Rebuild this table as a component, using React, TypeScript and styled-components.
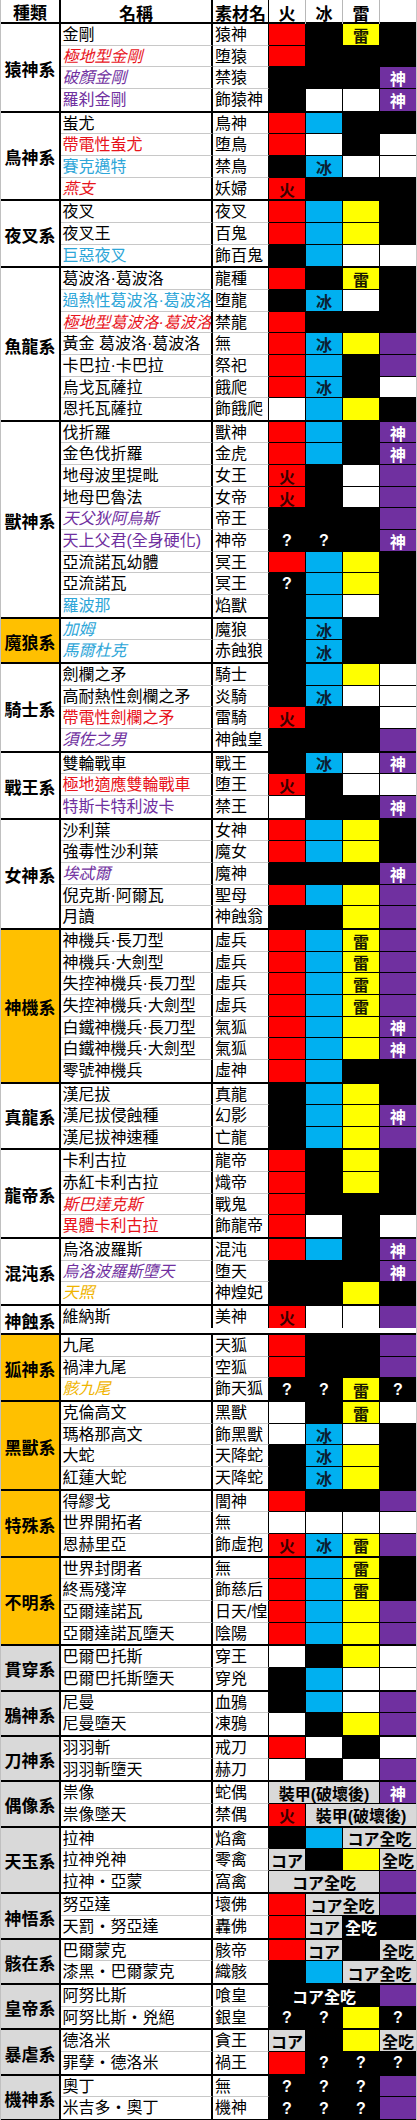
import React from "react";
import styled, { createGlobalStyle } from "styled-components";

const GlobalStyle = createGlobalStyle`
  body { margin: 0; background: #fff; }
  * { box-sizing: border-box; }
`;

const ROW_H = 21.66;

type Bg = "w" | "o" | "g";
type Tone = "r" | "b" | "p" | "g";
type RowData = [string, string, string, string?];
interface GroupData {
  cat: string;
  bg?: Bg;
  rows: RowData[];
}

const CAT_BG: Record<Bg, string> = { w: "#ffffff", o: "#ffc000", g: "#d9d9d9" };
const TONES: Record<Tone, string> = { r: "#e8141c", b: "#2ea6d8", p: "#7030a0", g: "#f0b400" };
const CELL_BG: Record<string, string> = {
  R: "#ff0000",
  B: "#00b0f0",
  Y: "#ffff00",
  P: "#7030a0",
  W: "#ffffff",
  K: "#000000",
  G: "#d9d9d9",
};
const CELL_FG: Record<string, string> = {
  R: "#3a0000",
  B: "#0b1f33",
  Y: "#1a1a00",
  P: "#ffffff",
  W: "#000000",
  K: "#ffffff",
  G: "#000000",
};

const groups: GroupData[] = [
  { cat: "猿神系", rows: [
    ["金剛", "猿神", "R K Y雷 K"],
    ["極地型金剛", "堕猿", "R K K K", "ri"],
    ["破顏金剛", "禁猿", "K K K P神", "pi"],
    ["羅刹金剛", "飾猿神", "K W W P神", "p"],
  ] },
  { cat: "鳥神系", rows: [
    ["蚩尤", "鳥神", "R B K K"],
    ["帶電性蚩尤", "堕鳥", "R W K W", "r"],
    ["賽克邁特", "禁鳥", "K B冰 W W", "b"],
    ["燕支", "妖婦", "R火 K K K", "ri"],
  ] },
  { cat: "夜叉系", rows: [
    ["夜叉", "夜叉", "R B Y K"],
    ["夜叉王", "百鬼", "R B Y K"],
    ["巨惡夜叉", "飾百鬼", "K B W W", "b"],
  ] },
  { cat: "魚龍系", rows: [
    ["葛波洛·葛波洛", "龍種", "R K Y雷 K"],
    ["過熱性葛波洛·葛波洛", "堕龍", "K B冰 W K", "b"],
    ["極地型葛波洛·葛波洛", "禁龍", "R K K K", "ri"],
    ["黃金 葛波洛·葛波洛", "無", "R B冰 Y P"],
    ["卡巴拉·卡巴拉", "祭祀", "R B K P"],
    ["烏戈瓦薩拉", "餓爬", "R B冰 K W"],
    ["恩托瓦薩拉", "飾餓爬", "W B Y K"],
  ] },
  { cat: "獸神系", rows: [
    ["伐折羅", "獸神", "R B K P神"],
    ["金色伐折羅", "金虎", "R B K P神"],
    ["地母波里提毗", "女王", "R火 K W P"],
    ["地母巴魯法", "女帝", "R火 K W P"],
    ["天父狄阿烏斯", "帝王", "K K K P", "pi"],
    ["天上父君(全身硬化)", "神帝", "K? K? K P神", "p"],
    ["亞流諾瓦幼體", "冥王", "R B Y K"],
    ["亞流諾瓦", "冥王", "K? B Y K"],
    ["羅波那", "焰獸", "K B W K", "b"],
  ] },
  { cat: "魔狼系", bg: "o", rows: [
    ["加姆", "魔狼", "K B冰 K K", "bi"],
    ["馬爾杜克", "赤蝕狼", "K B冰 K K", "bi"],
  ] },
  { cat: "騎士系", rows: [
    ["劍欄之矛", "騎士", "K B Y W"],
    ["高耐熱性劍欄之矛", "炎騎", "K B冰 W W"],
    ["帶電性劍欄之矛", "雷騎", "R火 K K W", "r"],
    ["須佐之男", "神蝕皇", "K K K P", "pi"],
  ] },
  { cat: "戰王系", rows: [
    ["雙輪戰車", "戰王", "K B冰 W P神"],
    ["極地適應雙輪戰車", "堕王", "R火 K W W", "r"],
    ["特斯卡特利波卡", "禁王", "W K K P神", "p"],
  ] },
  { cat: "女神系", rows: [
    ["沙利葉", "女神", "R B Y K"],
    ["強毒性沙利葉", "魔女", "R B Y K"],
    ["埃忒爾", "魔神", "K K K P神", "pi"],
    ["倪克斯·阿爾瓦", "聖母", "R B Y P"],
    ["月讀", "神蝕翁", "K K Y P"],
  ] },
  { cat: "神機系", bg: "o", rows: [
    ["神機兵·長刀型", "虛兵", "R B Y雷 P"],
    ["神機兵·大劍型", "虛兵", "R B Y雷 P"],
    ["失控神機兵·長刀型", "虛兵", "R B Y雷 P"],
    ["失控神機兵·大劍型", "虛兵", "R B Y雷 P"],
    ["白鐵神機兵·長刀型", "氣狐", "R B Y P神"],
    ["白鐵神機兵·大劍型", "氣狐", "R B Y P神"],
    ["零號神機兵", "虛神", "R B K K"],
  ] },
  { cat: "真龍系", rows: [
    ["漢尼拔", "真龍", "K B Y K"],
    ["漢尼拔侵蝕種", "幻影", "K B Y P神"],
    ["漢尼拔神速種", "亡龍", "K B Y P"],
  ] },
  { cat: "龍帝系", rows: [
    ["卡利古拉", "龍帝", "R K Y K"],
    ["赤紅卡利古拉", "熾帝", "R K Y K"],
    ["斯巴達克斯", "戰鬼", "R K K K", "ri"],
    ["異體卡利古拉", "飾龍帝", "R W K W", "r"],
  ] },
  { cat: "混沌系", rows: [
    ["烏洛波羅斯", "混沌", "R B K P神"],
    ["烏洛波羅斯墮天", "堕天", "K K K P神", "pi"],
    ["天照", "神煌妃", "K K Y K", "gi"],
  ] },
  { cat: "神蝕系", rows: [["維納斯", "美神", "R火 W W P"]] },
  { cat: "狐神系", bg: "o", rows: [
    ["九尾", "天狐", "R K K P"],
    ["禍津九尾", "空狐", "R K K P"],
    ["骸九尾", "飾天狐", "K? K? Y雷 K?", "gi"],
  ] },
  { cat: "黑獸系", bg: "o", rows: [
    ["克倫高文", "黑獸", "W K Y雷 W"],
    ["瑪格那高文", "飾黑獸", "W B冰 W K"],
    ["大蛇", "天降蛇", "K B冰 Y K"],
    ["紅蓮大蛇", "天降蛇", "K B冰 Y K"],
  ] },
  { cat: "特殊系", bg: "o", rows: [
    ["得繆戈", "闇神", "R K K P"],
    ["世界開拓者", "無", "W W W W"],
    ["恩赫里亞", "飾虛抱", "R火 B冰 Y雷 P"],
  ] },
  { cat: "不明系", bg: "o", rows: [
    ["世界封閉者", "無", "R B Y雷 K"],
    ["終焉殘滓", "飾慈后", "R B Y雷 K"],
    ["亞爾達諾瓦", "日天/惶", "R B Y P"],
    ["亞爾達諾瓦墮天", "陰陽", "R B Y P"],
  ] },
  { cat: "貫穿系", bg: "g", rows: [
    ["巴爾巴托斯", "穿王", "W K Y W"],
    ["巴爾巴托斯墮天", "穿兇", "K B W W"],
  ] },
  { cat: "鴉神系", bg: "g", rows: [
    ["尼曼", "血鴉", "K B W P"],
    ["尼曼墮天", "凍鴉", "W K Y P"],
  ] },
  { cat: "刀神系", bg: "g", rows: [
    ["羽羽斬", "戒刀", "R W K W"],
    ["羽羽斬墮天", "赫刀", "W K W P"],
  ] },
  { cat: "偶像系", bg: "g", rows: [
    ["祟像", "蛇偶", "G3裝甲(破壞後) P神"],
    ["祟像墜天", "禁偶", "R火 G3裝甲(破壞後)"],
  ] },
  { cat: "天玉系", bg: "g", rows: [
    ["拉神", "焰禽", "K B G2コア全吃"],
    ["拉神兇神", "零禽", "Gコア K Y G全吃"],
    ["拉神・亞蒙", "窩禽", "G3コア全吃 P"],
  ] },
  { cat: "神悟系", bg: "g", rows: [
    ["努亞達", "壞佛", "R G2コア全吃 P"],
    ["天罰・努亞達", "轟佛", "R Gコア K全吃 K"],
  ] },
  { cat: "骸在系", bg: "g", rows: [
    ["巴爾蒙克", "骸帝", "R Gコア K G全吃"],
    ["漆黑・巴爾蒙克", "織骸", "K B G2コア全吃"],
  ] },
  { cat: "皇帝系", bg: "g", rows: [
    ["阿努比斯", "喰皇", "K3コア全吃 P"],
    ["阿努比斯・兇絕", "銀皇", "K? K? Y K?"],
  ] },
  { cat: "暴虐系", bg: "g", rows: [
    ["德洛米", "貪王", "Gコア K Y G全吃"],
    ["罪孽・德洛米", "禍王", "R K? K? K?"],
  ] },
  { cat: "機神系", bg: "g", rows: [
    ["奧丁", "無", "K? K? K? P"],
    ["米吉多・奧丁", "機神", "K? K? K? P"],
  ] },
];

const Sheet = styled.div`
  width: 417px;
  border-left: 1px solid #c0c0c0;
  border-right: 1px solid #c8c8c8;
  font-family: "Noto Sans CJK TC", "Noto Sans CJK JP", sans-serif;
  color: #000;
`;

const HeaderRow = styled.div`
  display: flex;
  height: 24px;
  border-bottom: 2px solid #000;
`;

const HeadCat = styled.div`
  width: 60px;
  flex: none;
  border-right: 2px solid #000;
  display: flex;
  align-items: center;
  justify-content: center;
  font-size: 17px;
  font-weight: 700;
`;

const HeadGrid = styled.div`
  flex: 1;
  display: grid;
  grid-template-columns: 152px 56px 37px 37px 37px 36px;
`;

const HeadCell = styled.div<{ $edge: "thick" | "thin" | "grid" | "none" }>`
  display: flex;
  align-items: center;
  justify-content: center;
  font-size: 17px;
  font-weight: 700;
  white-space: nowrap;
  border-right: ${({ $edge }) =>
    $edge === "thick"
      ? "2px solid #000"
      : $edge === "thin"
      ? "1px solid #000"
      : $edge === "grid"
      ? "1px solid #b8b8b8"
      : "0"};
`;

const Group = styled.div`
  display: flex;
  border-bottom: 2px solid #000;
`;

const CatCell = styled.div<{ $bg: Bg }>`
  width: 60px;
  flex: none;
  border-right: 2px solid #000;
  background: ${({ $bg }) => CAT_BG[$bg]};
  display: flex;
  align-items: center;
  justify-content: center;
  font-size: 17px;
  font-weight: 700;
  white-space: nowrap;
  padding-top: 2px;
`;

const Rows = styled.div`
  flex: 1;
  display: flex;
  flex-direction: column;
`;

const Row = styled.div`
  display: grid;
  grid-template-columns: 152px 56px 37px 37px 37px 36px;
  height: ${ROW_H}px;

  &:last-child > div {
    border-bottom-width: 0;
  }
`;

const NameCell = styled.div<{ $tone?: Tone; $italic?: boolean }>`
  border-right: 2px solid #000;
  border-bottom: 1px solid #c8c8c8;
  padding: 1px 0 0 1.5px;
  font-family: "Liberation Sans", "Noto Sans CJK TC", "Noto Sans CJK JP", sans-serif;
  font-size: 16px;
  line-height: ${ROW_H - 1}px;
  white-space: nowrap;
  overflow: hidden;
  color: ${({ $tone }) => ($tone ? TONES[$tone] : "#000")};
  font-style: ${({ $italic }) => ($italic ? "italic" : "normal")};
`;

const MatCell = styled.div`
  border-right: 1px solid #000;
  border-bottom: 1px solid #c8c8c8;
  padding: 1px 0 0 2px;
  font-family: "Liberation Sans", "Noto Sans CJK TC", "Noto Sans CJK JP", sans-serif;
  font-size: 16px;
  line-height: ${ROW_H - 1}px;
  white-space: nowrap;
  overflow: hidden;
`;

const ElemCell = styled.div<{ $c: string; $span: number }>`
  grid-column: span ${({ $span }) => $span};
  background: ${({ $c }) => CELL_BG[$c]};
  color: ${({ $c }) => CELL_FG[$c]};
  border-right: 1px solid #000;
  border-bottom: 1px solid #000;
  display: flex;
  align-items: center;
  justify-content: center;
  font-family: "Liberation Sans", "Noto Sans CJK TC", "Noto Sans CJK JP", sans-serif;
  font-size: 16px;
  font-weight: 700;
  white-space: nowrap;
  overflow: hidden;
  padding-top: 1px;

  &:last-child {
    border-right: 0;
  }
`;

function parseCells(spec: string) {
  return spec.split(" ").map((t) => {
    const c = t[0];
    if (/\d/.test(t[1] ?? "")) return { c, span: Number(t[1]), text: t.slice(2) };
    return { c, span: 1, text: t.slice(1) };
  });
}

function toneOf(style?: string): { tone?: Tone; italic: boolean } {
  if (!style) return { italic: false };
  return { tone: style[0] as Tone, italic: style.includes("i") };
}

export default function App() {
  return (
    <>
      <GlobalStyle />
      <Sheet>
        <HeaderRow>
          <HeadCat>種類</HeadCat>
          <HeadGrid>
            <HeadCell $edge="thick">名稱</HeadCell>
            <HeadCell $edge="thin">素材名</HeadCell>
            <HeadCell $edge="grid">火</HeadCell>
            <HeadCell $edge="grid">冰</HeadCell>
            <HeadCell $edge="grid">雷</HeadCell>
            <HeadCell $edge="none"></HeadCell>
          </HeadGrid>
        </HeaderRow>
        {groups.map((g) => (
          <Group key={g.cat}>
            <CatCell $bg={g.bg ?? "w"}>{g.cat}</CatCell>
            <Rows>
              {g.rows.map(([name, mat, spec, style]) => {
                const { tone, italic } = toneOf(style);
                return (
                  <Row key={name}>
                    <NameCell $tone={tone} $italic={italic}>
                      {name}
                    </NameCell>
                    <MatCell>{mat}</MatCell>
                    {parseCells(spec).map((cell, i) => (
                      <ElemCell key={i} $c={cell.c} $span={cell.span}>
                        {cell.text}
                      </ElemCell>
                    ))}
                  </Row>
                );
              })}
            </Rows>
          </Group>
        ))}
      </Sheet>
    </>
  );
}
